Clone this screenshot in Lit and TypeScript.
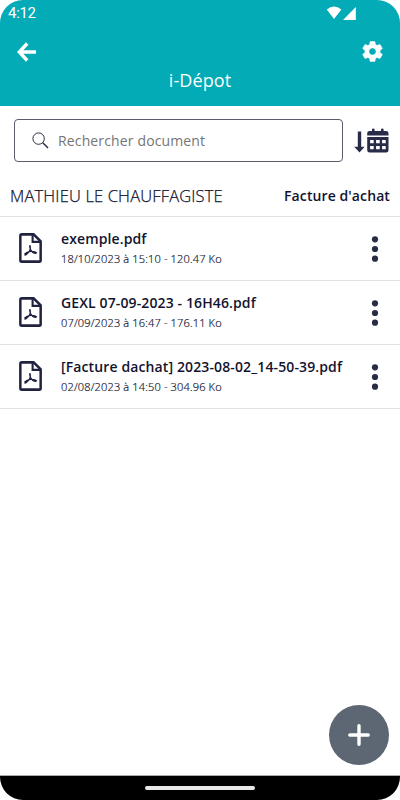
import { LitElement, html, css } from "lit";
import { customElement } from "lit/decorators.js";

interface Doc {
  name: string;
  meta: string;
}

const DOCS: Doc[] = [
  { name: "exemple.pdf", meta: "18/10/2023 à 15:10 - 120.47 Ko" },
  { name: "GEXL 07-09-2023 - 16H46.pdf", meta: "07/09/2023 à 16:47 - 176.11 Ko" },
  { name: "[Facture dachat] 2023-08-02_14-50-39.pdf", meta: "02/08/2023 à 14:50 - 304.96 Ko" },
];

@customElement("app-root")
export class AppRoot extends LitElement {
  static styles = css`
    :host {
      display: block;
      height: 800px;
      background: #fff;
      font-family: "Open Sans", "Noto Sans", sans-serif;
      color: #12142f;
    }
    * { box-sizing: border-box; }
    svg { display: block; flex: none; }
    .phone {
      position: relative;
      display: flex;
      flex-direction: column;
      width: 400px;
      height: 800px;
      border-radius: 23px;
      overflow: hidden;
      background: #fff;
      white-space: nowrap;
    }
    header { height: 106px; background: #02abb5; color: #fff; flex: none; }
    .status {
      height: 24px;
      display: flex;
      align-items: center;
      justify-content: space-between;
      padding: 1px 44px 0 8px;
      font: 400 15px/20px Roboto, sans-serif;
      letter-spacing: -0.3px;
    }
    .nav {
      height: 44px;
      display: flex;
      align-items: center;
      justify-content: space-between;
      padding: 11px 17px 0 17px;
    }
    .title {
      font-size: 18px;
      line-height: 24px;
      text-align: center;
      letter-spacing: 0.1px;
    }
    .search {
      height: 69px;
      display: flex;
      align-items: center;
      justify-content: space-between;
      padding: 0 10px 0 14px;
      flex: none;
    }
    .field {
      width: 329px;
      height: 43px;
      border: 1px solid #5b5a6e;
      border-radius: 4px;
      display: flex;
      align-items: center;
      gap: 9px;
      padding: 0 0 1px 17px;
      font-size: 14px;
      letter-spacing: 0.14px;
      color: #757575;
    }
    .group {
      height: 42px;
      display: flex;
      align-items: center;
      justify-content: space-between;
      padding: 0 10px 0 10px;
      border-bottom: 1px solid #e2e2e4;
      flex: none;
    }
    .client { font-size: 16.5px; font-weight: 300; letter-spacing: 0.16px; -webkit-text-stroke: 0.25px; }
    .kind { font-size: 14px; font-weight: 600; letter-spacing: 0.1px; }
    .doc {
      height: 64px;
      display: flex;
      align-items: center;
      border-bottom: 1px solid #e2e2e4;
      padding: 0 20px 0 19px;
      flex: none;
    }
    .file { margin-bottom: 1px; }
    .text { flex: 1; padding-left: 19px; }
    .name { font-size: 14px; line-height: 20px; font-weight: 600; letter-spacing: 0.12px; }
    .meta { font-size: 11px; line-height: 20px; font-weight: 300; letter-spacing: 0.16px; -webkit-text-stroke: 0.2px; }
    .add {
      position: absolute;
      right: 11px;
      bottom: 35px;
      width: 60px;
      height: 60px;
      border-radius: 50%;
      background: #5d6673;
      display: grid;
      place-items: center;
    }
    .bar {
      margin-top: auto;
      height: 25px;
      background: #000;
      border-top: 1px solid #aaa;
      display: flex;
      align-items: center;
      justify-content: center;
      padding-right: 1px;
    }
    .pill { width: 110px; height: 4px; border-radius: 2px; background: #e9e9e9; }
  `;

  private renderDoc(doc: Doc) {
    return html`
      <div class="doc">
        <svg class="file" width="23" height="30" viewBox="0 0 24 30" preserveAspectRatio="none" fill="none" stroke="#1f2340">
          <path d="M2.9 1.4H15.2L22.6 8.2V27.2Q22.6 28.6 21.2 28.6H2.8Q1.4 28.6 1.4 27.2V2.8Q1.4 1.4 2.9 1.4Z" stroke-width="2.6" />
          <path d="M14.2 1.5V8.8H22.5" stroke-width="2.2" />
          <path d="M11.3 12.2Q12.8 16 10.4 18.8Q8.4 21.4 5.8 22.3M5.6 21.2Q8 19 12.2 18.4Q16.4 18 18.7 20M18 20.6Q13.8 20.2 11.9 16.4Q10.9 14 11.3 12.2" stroke-width="1.35" />
        </svg>
        <div class="text">
          <div class="name">${doc.name}</div>
          <div class="meta">${doc.meta}</div>
        </div>
        <svg width="10" height="26" viewBox="0 0 10 26" fill="#282c45">
          <circle cx="5" cy="3.3" r="3.1" /><circle cx="5" cy="13" r="3.1" /><circle cx="5" cy="22.7" r="3.1" />
        </svg>
      </div>`;
  }

  render() {
    return html`
      <div class="phone">
        <header>
          <div class="status">
            <span>4:12</span>
            <svg width="30" height="14" viewBox="0 0 30 14" fill="#fff">
              <path d="M.8 3.6Q8 -2.4 15.4 3.6L8 13Z" /><path d="M29.8 1V14H17Z" />
            </svg>
          </div>
          <div class="nav">
            <svg width="20" height="20" viewBox="0 0 20 20" fill="none" stroke="#fff" stroke-width="3.4">
              <path d="M19 10H3.5M10.2 1.5L2.3 10L10.2 18.5" />
            </svg>
            <svg width="21" height="21" viewBox="2 2 20 20" fill="#fff">
              <path d="M19.14 12.94c.04-.3.06-.61.06-.94 0-.32-.02-.64-.07-.94l2.03-1.58c.18-.14.23-.41.12-.61l-1.92-3.32c-.12-.22-.37-.29-.59-.22l-2.39.96c-.5-.38-1.03-.7-1.62-.94l-.36-2.54c-.04-.24-.24-.41-.48-.41h-3.84c-.24 0-.43.17-.47.41l-.36 2.54c-.59.24-1.13.57-1.62.94l-2.39-.96c-.22-.08-.47 0-.59.22L2.74 8.87c-.12.21-.08.47.12.61l2.03 1.58c-.05.3-.09.63-.09.94s.02.64.07.94l-2.03 1.58c-.18.14-.23.41-.12.61l1.92 3.32c.12.22.37.29.59.22l2.39-.96c.5.38 1.03.7 1.62.94l.36 2.54c.05.24.24.41.48.41h3.84c.24 0 .44-.17.47-.41l.36-2.54c.59-.24 1.13-.56 1.62-.94l2.39.96c.22.08.47 0 .59-.22l1.92-3.32c.12-.22.07-.47-.12-.61l-2.01-1.58zM12 15.4c-1.87 0-3.4-1.53-3.4-3.4s1.53-3.4 3.4-3.4 3.4 1.53 3.4 3.4-1.53 3.4-3.4 3.4z" stroke="#fff" stroke-width=".5" />
            </svg>
          </div>
          <div class="title">i-Dépot</div>
        </header>
        <div class="search">
          <div class="field">
            <svg width="17" height="17" viewBox="0 0 17 17" fill="none" stroke="#2c2c42">
              <circle cx="6.6" cy="6.6" r="5.7" stroke-width="1" /><path d="M10.8 10.8L16 16" stroke-width="1.5" />
            </svg>
            <span>Rechercher document</span>
          </div>
          <svg width="36" height="26" viewBox="0 0 36 26" fill="#282c48">
            <path d="M3.8 3.6H7.2V18.8H10.6L5.5 24.6L.3 18.8H3.8Z" />
            <path d="M15.5 3H18V1.6Q18 .4 19.3 .4T20.6 1.6V3H27V1.6Q27 .4 28.3 .4T29.6 1.6V3H32Q34.5 3 34.5 5.3V7.4H13.2V5.3Q13.2 3 15.5 3Z" />
            <path fill-rule="evenodd" d="M13.2 8.9H34.5V22.2Q34.5 24.6 32.1 24.6H15.6Q13.2 24.6 13.2 22.2ZM16.1 11.9V15.2H19.7V11.9ZM22.1 11.9V15.2H25.7V11.9ZM28.1 11.9V15.2H31.7V11.9ZM16.1 17.9V21.3H19.7V17.9ZM22.1 17.9V21.3H25.7V17.9ZM28.1 17.9V21.3H31.7V17.9Z" />
          </svg>
        </div>
        <div class="group"><span class="client">MATHIEU LE CHAUFFAGISTE</span><span class="kind">Facture d'achat</span></div>
        ${DOCS.map((d) => this.renderDoc(d))}
        <div class="add">
          <svg width="22" height="22" viewBox="0 0 22 22" stroke="#fff" stroke-width="3.4" stroke-linecap="round"><path d="M11 1.8V20.2M1.8 11H20.2" /></svg>
        </div>
        <div class="bar"><div class="pill"></div></div>
      </div>`;
  }
}
